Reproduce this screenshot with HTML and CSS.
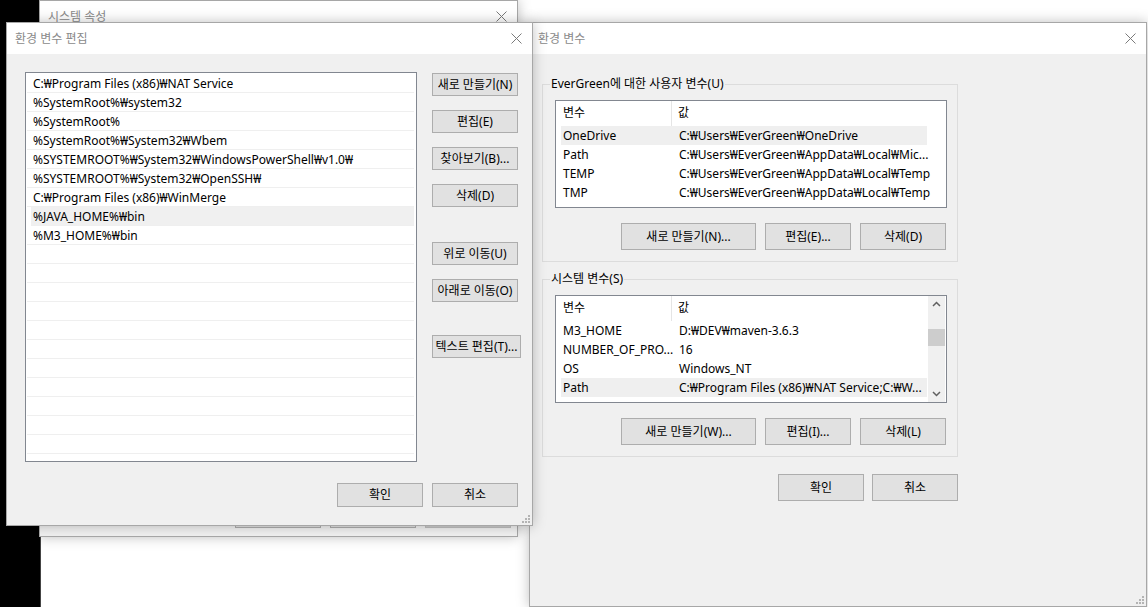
FILE: index.html
```html
<!DOCTYPE html>
<html lang="ko">
<head>
    <meta charset="UTF-8">
    <title>환경 변수</title>
    <link rel="stylesheet" href="styles.css">
</head>
<body>
<div class="desk">
    <div class="black-strip"></div>

    <!-- 시스템 속성 (background window) -->
    <div class="win win-sys">
        <div class="titlebar">
            <span class="title">시스템 속성</span>
            <svg class="close" width="11" height="11" viewBox="0 0 11 11"><path d="M0.5 0.5L10.5 10.5M10.5 0.5L0.5 10.5" stroke="#7a7a7a" stroke-width="1"/></svg>
        </div>
        <div class="sys-body">
            <div class="btn-row sys-btns">
                <button class="btn">확인</button>
                <button class="btn">취소</button>
                <button class="btn btn-off">적용(A)</button>
            </div>
        </div>
    </div>

    <!-- 환경 변수 -->
    <div class="win win-env">
        <div class="titlebar">
            <span class="title">환경 변수</span>
            <svg class="close" width="11" height="11" viewBox="0 0 11 11"><path d="M0.5 0.5L10.5 10.5M10.5 0.5L0.5 10.5" stroke="#7a7a7a" stroke-width="1"/></svg>
        </div>
        <div class="env-body">
            <fieldset class="group">
                <legend>EverGreen에 대한 사용자 변수(U)</legend>
                <div class="lv">
                    <div class="lv-main">
                        <div class="lv-head"><span class="h1">변수</span><span class="h2">값</span></div>
                        <div class="lv-row sel"><span>OneDrive</span><span>C:₩Users₩EverGreen₩OneDrive</span></div>
                        <div class="lv-row"><span>Path</span><span>C:₩Users₩EverGreen₩AppData₩Local₩Mic...</span></div>
                        <div class="lv-row"><span>TEMP</span><span>C:₩Users₩EverGreen₩AppData₩Local₩Temp</span></div>
                        <div class="lv-row"><span>TMP</span><span>C:₩Users₩EverGreen₩AppData₩Local₩Temp</span></div>
                    </div>
                    <div class="lv-side"></div>
                </div>
                <div class="btn-row group-btns">
                    <button class="btn btn-big wide">새로 만들기(N)...</button>
                    <button class="btn btn-big">편집(E)...</button>
                    <button class="btn btn-big">삭제(D)</button>
                </div>
            </fieldset>

            <fieldset class="group group-sys">
                <legend>시스템 변수(S)</legend>
                <div class="lv">
                    <div class="lv-main">
                        <div class="lv-head"><span class="h1">변수</span><span class="h2">값</span></div>
                        <div class="lv-row"><span>M3_HOME</span><span>D:₩DEV₩maven-3.6.3</span></div>
                        <div class="lv-row"><span>NUMBER_OF_PRO...</span><span>16</span></div>
                        <div class="lv-row"><span>OS</span><span>Windows_NT</span></div>
                        <div class="lv-row sel"><span>Path</span><span>C:₩Program Files (x86)₩NAT Service;C:₩W...</span></div>
                    </div>
                    <div class="lv-side">
                        <div class="sb">
                            <svg class="sb-arrow" width="17" height="17" viewBox="0 0 17 17"><path d="M5 10L8.5 6.5L12 10" fill="none" stroke="#606060" stroke-width="1.5"/></svg>
                            <div class="sb-track"><div class="sb-thumb"></div></div>
                            <svg class="sb-arrow" width="17" height="17" viewBox="0 0 17 17"><path d="M5 7L8.5 10.5L12 7" fill="none" stroke="#606060" stroke-width="1.5"/></svg>
                        </div>
                    </div>
                </div>
                <div class="btn-row group-btns">
                    <button class="btn btn-big wide">새로 만들기(W)...</button>
                    <button class="btn btn-big">편집(I)...</button>
                    <button class="btn btn-big">삭제(L)</button>
                </div>
            </fieldset>

            <div class="btn-row env-ok">
                <button class="btn btn-big">확인</button>
                <button class="btn btn-big">취소</button>
            </div>
        </div>
        <svg class="grip" width="8" height="8" viewBox="0 0 8 8"><path d="M6 0h2v2h-2zM3 3h2v2h-2zM6 3h2v2h-2zM0 6h2v2h-2zM3 6h2v2h-2zM6 6h2v2h-2z" fill="#b4b4b4"/></svg>
    </div>

    <!-- 환경 변수 편집 (front dialog) -->
    <div class="win win-edit">
        <div class="titlebar">
            <span class="title">환경 변수 편집</span>
            <svg class="close" width="11" height="11" viewBox="0 0 11 11"><path d="M0.5 0.5L10.5 10.5M10.5 0.5L0.5 10.5" stroke="#7a7a7a" stroke-width="1"/></svg>
        </div>
        <div class="edit-body">
            <div class="edit-main">
                <div class="path-list">
                    <div class="row">C:₩Program Files (x86)₩NAT Service</div>
                    <div class="row">%SystemRoot%₩system32</div>
                    <div class="row">%SystemRoot%</div>
                    <div class="row">%SystemRoot%₩System32₩Wbem</div>
                    <div class="row">%SYSTEMROOT%₩System32₩WindowsPowerShell₩v1.0₩</div>
                    <div class="row">%SYSTEMROOT%₩System32₩OpenSSH₩</div>
                    <div class="row">C:₩Program Files (x86)₩WinMerge</div>
                    <div class="row sel">%JAVA_HOME%₩bin</div>
                    <div class="row">%M3_HOME%₩bin</div>
                    <div class="row"></div>
                    <div class="row"></div>
                    <div class="row"></div>
                    <div class="row"></div>
                    <div class="row"></div>
                    <div class="row"></div>
                    <div class="row"></div>
                    <div class="row"></div>
                    <div class="row"></div>
                    <div class="row"></div>
                    <div class="row"></div>
                    <div class="row"></div>
                </div>
                <div class="side-btns">
                    <button class="btn">새로 만들기(N)</button>
                    <button class="btn">편집(E)</button>
                    <button class="btn">찾아보기(B)...</button>
                    <button class="btn">삭제(D)</button>
                    <button class="btn gap-up">위로 이동(U)</button>
                    <button class="btn">아래로 이동(O)</button>
                    <button class="btn gap-text wide-t">텍스트 편집(T)...</button>
                </div>
            </div>
            <div class="btn-row edit-ok">
                <button class="btn">확인</button>
                <button class="btn">취소</button>
            </div>
        </div>
        <svg class="grip" width="8" height="8" viewBox="0 0 8 8"><path d="M6 0h2v2h-2zM3 3h2v2h-2zM6 3h2v2h-2zM0 6h2v2h-2zM3 6h2v2h-2zM6 6h2v2h-2z" fill="#b4b4b4"/></svg>
    </div>
</div>
</body>
</html>
```

FILE: styles.css
```css
* {
    box-sizing: border-box;
}

body {
    margin: 0;
    background-color: #fff;
    font-family: "Noto Sans", "Noto Sans CJK KR", sans-serif;
    font-size: 12px;
    color: #000;
    overflow: hidden;
}

.desk {
    position: relative;
    width: 1148px;
    height: 607px;
}

.black-strip {
    position: absolute;
    left: 0;
    top: 0;
    width: 41px;
    height: 607px;
    background-color: #000;
    border-right: 1px solid #444;
}

/* windows */
.win {
    position: absolute;
    display: flex;
    flex-direction: column;
    background-color: #f0f0f0;
    border: 1px solid #a7a7a7;
    box-shadow: 0 0 12px rgba(0, 0, 0, 0.25);
}

.win-sys {
    left: 39px;
    top: 0;
    width: 479px;
    height: 537px;
}

.win-env {
    left: 529px;
    top: 22px;
    width: 618px;
    height: 585px;
}

.win-edit {
    left: 6px;
    top: 22px;
    width: 527px;
    height: 504px;
}

.titlebar {
    flex-shrink: 0;
    height: 31px;
    display: flex;
    align-items: center;
    justify-content: space-between;
    padding: 0 10px 0 8px;
    background-color: #fff;
}

.title {
    color: #8a8a8a;
    font-size: 12px;
    line-height: 16px;
}

.close {
    display: block;
}

.grip {
    position: absolute;
    right: 2px;
    bottom: 2px;
}

/* buttons */
.btn {
    height: 23px;
    width: 86px;
    padding: 0;
    margin: 0;
    border: 1px solid #adadad;
    background-color: #e1e1e1;
    font-family: inherit;
    font-size: 12px;
    line-height: 16px;
    color: #000;
    white-space: nowrap;
}

.btn-big {
    height: 27px;
}

.btn-off {
    background-color: #cccccc;
    border-color: #bfbfbf;
}

.btn-row {
    display: flex;
    justify-content: flex-end;
}

/* 시스템 속성 */
.sys-body {
    flex: 1;
    display: flex;
    flex-direction: column;
    justify-content: flex-end;
    padding: 0 6px 8px 0;
}

.sys-btns .btn {
    height: 24px;
}

.sys-btns .btn + .btn {
    margin-left: 9px;
}

/* 환경 변수 편집 */
.edit-body {
    flex: 1;
    display: flex;
    flex-direction: column;
    padding: 18px 14px 0 18px;
}

.edit-main {
    display: flex;
    gap: 15px;
}

.path-list {
    flex-shrink: 0;
    width: 392px;
    height: 390px;
    overflow: hidden;
    padding: 1px 2px 0 1px;
    border: 1px solid #828790;
    background-color: #fff;
}

.path-list .row {
    height: 19px;
    padding-left: 6px;
    line-height: 19px;
    border-bottom: 1px solid #efefef;
    white-space: nowrap;
}

.path-list .row.sel {
    background-color: #f0f0f0;
    margin-left: 4px;
    padding-left: 2px;
}

.side-btns {
    flex-shrink: 0;
    width: 86px;
    display: flex;
    flex-direction: column;
    gap: 14px;
    padding-top: 1px;
}

.side-btns .gap-up {
    margin-top: 21px;
}

.side-btns .gap-text {
    margin-top: 19px;
}

.side-btns .wide-t {
    width: 89px;
}

.edit-ok {
    margin-top: 21px;
    gap: 9px;
}

.edit-ok .btn {
    height: 24px;
}

/* 환경 변수 */
.env-body {
    flex: 1;
    padding: 22px 0 0 12px;
}

.group {
    width: 416px;
    margin: 0;
    padding: 8px 10px 11px 12px;
    border: 1px solid #dcdcdc;
}

.group legend {
    margin-left: -5px;
    padding: 0 1px;
    line-height: 16px;
}

.group-sys {
    margin-top: 9px;
}

.lv {
    display: flex;
    height: 108px;
    border: 1px solid #828790;
    background-color: #fff;
}

.lv-main {
    width: 371px;
}

.lv-side {
    width: 19px;
    padding-left: 1px;
}

.lv-head {
    display: flex;
    height: 25px;
    line-height: 24px;
}

.lv-head .h1 {
    width: 116px;
    padding-left: 7px;
    border-right: 1px solid #e5e5e5;
}

.lv-head .h2 {
    padding-left: 6px;
}

.lv-row {
    display: grid;
    grid-template-columns: 111px 1fr;
    height: 19px;
    margin-left: 5px;
    line-height: 19px;
    white-space: nowrap;
}

.lv-row span:first-child {
    padding-left: 2px;
}

.lv-row span:last-child {
    padding-left: 7px;
}

.lv-row.sel {
    background-color: #efefef;
}

.sb {
    display: flex;
    flex-direction: column;
    width: 17px;
    height: 106px;
    background-color: #f0f0f0;
}

.sb-arrow {
    display: block;
    flex-shrink: 0;
}

.sb-track {
    flex: 1;
    padding-top: 16px;
}

.sb-thumb {
    height: 17px;
    background-color: #cdcdcd;
}

.group-btns {
    margin-top: 15px;
    margin-right: 1px;
}

.group-btns .btn + .btn {
    margin-left: 9px;
}

.group-btns .wide {
    width: 135px;
}

.env-ok {
    width: 416px;
    margin-top: 17px;
    gap: 8px;
}
```
